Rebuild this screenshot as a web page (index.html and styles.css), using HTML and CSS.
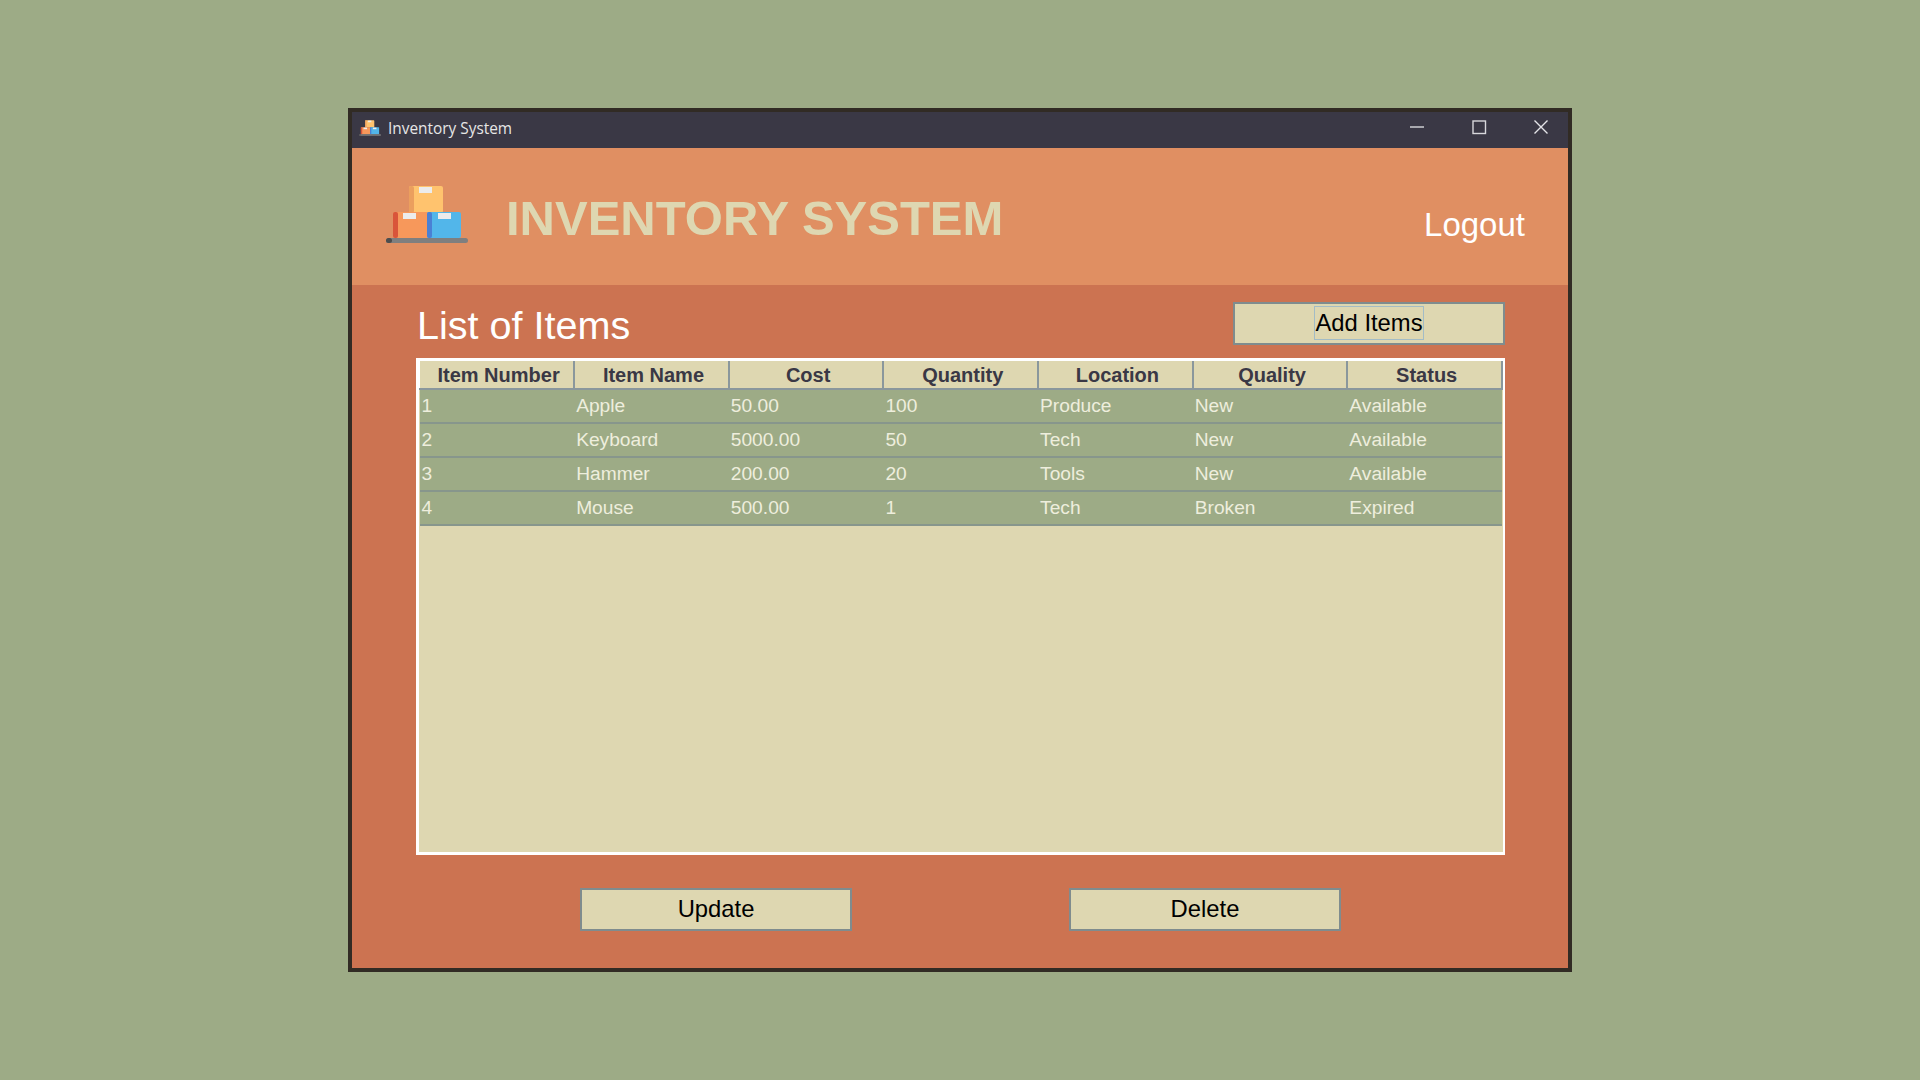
FILE: index.html
```html
<!DOCTYPE html>
<html lang="en">
<head>
    <meta charset="UTF-8">
    <title>Inventory System</title>
    <link rel="stylesheet" href="styles.css">
</head>
<body>
    <svg class="defs" width="0" height="0">
        <symbol id="boxes" viewBox="0 0 82 57">
            <rect x="23" y="0" width="34" height="27" rx="2" fill="#ffc36e"/>
            <rect x="23" y="0" width="5" height="27" rx="2" fill="#eb9f5e"/>
            <rect x="33" y="1" width="13" height="6" fill="#ececec"/>
            <rect x="7" y="26" width="36" height="26" rx="2" fill="#f7985b"/>
            <rect x="7" y="26" width="5" height="26" rx="2" fill="#d9553a"/>
            <rect x="17" y="27" width="13" height="6" fill="#ececec"/>
            <rect x="41" y="26" width="34" height="26" rx="2" fill="#52b6ea"/>
            <rect x="41" y="26" width="5" height="26" rx="2" fill="#4a80d4"/>
            <rect x="52" y="27" width="13" height="6" fill="#ececec"/>
            <rect x="0" y="52" width="82" height="5" rx="2.5" fill="#7f7f7f"/>
            <rect x="0" y="52" width="6" height="5" rx="2.5" fill="#4d4d4d"/>
        </symbol>
    </svg>

    <div class="window">
        <div class="titlebar">
            <svg class="title-icon"><use href="#boxes"/></svg>
            <span class="title-text">Inventory System</span>
            <div class="controls">
                <svg class="ctrl" viewBox="0 0 16 16"><path d="M1 8h14" stroke="#d8d8dc" stroke-width="1.4"/></svg>
                <svg class="ctrl" viewBox="0 0 16 16"><rect x="2" y="2" width="12.5" height="12.5" fill="none" stroke="#d8d8dc" stroke-width="1.4"/></svg>
                <svg class="ctrl" viewBox="0 0 16 16"><path d="M1.5 1.5l13 13M14.5 1.5l-13 13" stroke="#e4e4e8" stroke-width="1.4"/></svg>
            </div>
        </div>

        <div class="header">
            <svg class="logo"><use href="#boxes"/></svg>
            <h1 class="app-name">INVENTORY SYSTEM</h1>
            <a class="logout">Logout</a>
        </div>

        <div class="content">
            <div class="list-top">
                <h2 class="list-title">List of Items</h2>
                <button class="btn"><span class="focus">Add Items</span></button>
            </div>

            <div class="table-panel">
                <table class="items">
                    <thead>
                        <tr>
                            <th>Item Number</th>
                            <th>Item Name</th>
                            <th>Cost</th>
                            <th>Quantity</th>
                            <th>Location</th>
                            <th>Quality</th>
                            <th>Status</th>
                        </tr>
                    </thead>
                    <tbody>
                        <tr><td>1</td><td>Apple</td><td>50.00</td><td>100</td><td>Produce</td><td>New</td><td>Available</td></tr>
                        <tr><td>2</td><td>Keyboard</td><td>5000.00</td><td>50</td><td>Tech</td><td>New</td><td>Available</td></tr>
                        <tr><td>3</td><td>Hammer</td><td>200.00</td><td>20</td><td>Tools</td><td>New</td><td>Available</td></tr>
                        <tr><td>4</td><td>Mouse</td><td>500.00</td><td>1</td><td>Tech</td><td>Broken</td><td>Expired</td></tr>
                    </tbody>
                </table>
            </div>

            <div class="actions">
                <button class="btn">Update</button>
                <button class="btn">Delete</button>
            </div>
        </div>
    </div>
</body>
</html>
```

FILE: styles.css
```css
* {
    box-sizing: border-box;
}
body {
    margin: 0;
    height: 1080px;
    background-color: #9DAB86;
    font-family: "Liberation Sans", Arial, sans-serif;
    display: flex;
    align-items: center;
    justify-content: center;
}
.defs {
    display: none;
}
.window {
    width: 1224px;
    height: 864px;
    border: 4px solid #312b24;
    display: flex;
    flex-direction: column;
    background-color: #CC7351;
}
.titlebar {
    height: 36px;
    flex: none;
    background-color: #3A3845;
    display: flex;
    align-items: center;
    padding: 0 19px 0 7px;
}
.title-icon {
    width: 22px;
    height: 20px;
    margin-top: -4px;
    filter: blur(0.4px);
}
.title-text {
    margin-left: 7px;
    margin-top: -4px;
    font-family: "Open Sans", sans-serif;
    font-size: 15.4px;
    color: #e6e6e6;
}
.controls {
    margin-left: auto;
    margin-top: -7px;
    display: flex;
    gap: 46px;
}
.ctrl {
    width: 16px;
    height: 16px;
}
.header {
    height: 137px;
    flex: none;
    background-color: #E08F62;
    display: flex;
    align-items: center;
    padding: 0 43px 0 34px;
}
.logo {
    width: 82px;
    height: 57px;
    margin-top: -4px;
    filter: blur(0.5px);
}
.app-name {
    margin: 2px 0 0 38px;
    font-size: 49px;
    font-weight: bold;
    color: #DED7B1;
}
.logout {
    margin-left: auto;
    padding-top: 16px;
    font-size: 33px;
    color: #fff;
}
.content {
    flex: 1;
    padding: 17px 63px 0 64px;
}
.list-top {
    height: 43px;
    display: flex;
    align-items: center;
    justify-content: space-between;
}
.list-title {
    margin: 3px 0 0 1px;
    font-size: 39.6px;
    font-weight: normal;
    color: #fff;
}
.btn {
    width: 272px;
    height: 43px;
    padding: 0 0 2px;
    background-color: #DED7B1;
    border: 2px solid #7f8c8e;
    font-family: inherit;
    font-size: 23.8px;
    color: #000;
}
.focus {
    display: inline-block;
    line-height: 32px;
    border: 1px solid #a3bcc6;
}
.table-panel {
    margin-top: 13px;
    height: 497px;
    border: 3px solid #fff;
    border-right-width: 2px;
    background-color: #DED7B1;
}
.items {
    width: 100%;
    table-layout: fixed;
    border-collapse: collapse;
}
.items th {
    height: 28px;
    padding: 1px 0 0 4px;
    background-color: #DED7B1;
    border-left: 1px solid #fff;
    border-right: 2px solid #8a979c;
    border-bottom: 2px solid #8a979c;
    font-size: 20px;
    font-weight: bold;
    color: #3A3845;
}
.items td {
    height: 34px;
    padding: 0 0 0 2px;
    background-color: #9DAB86;
    border-bottom: 2px solid #87968c;
    font-size: 19.2px;
    color: #eeeedd;
}
.actions {
    margin-top: 33px;
    padding-left: 164px;
    display: flex;
    gap: 217px;
}
```
